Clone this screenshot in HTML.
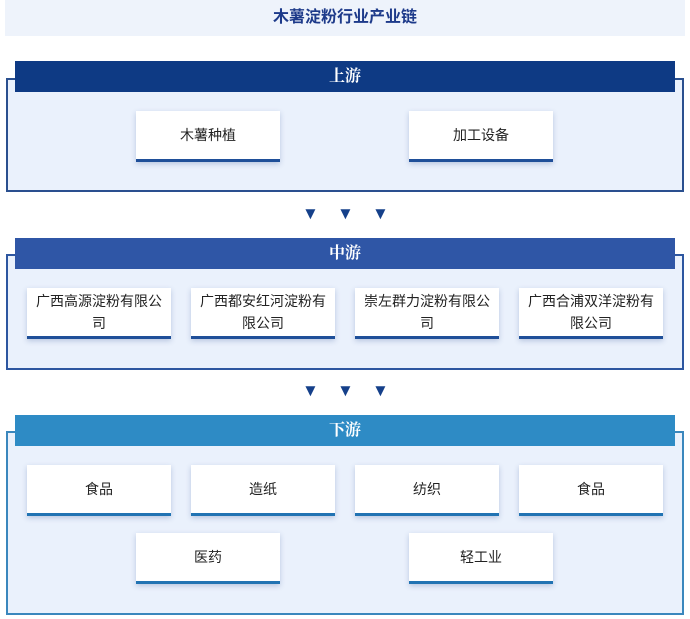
<!DOCTYPE html>
<html><head><meta charset="utf-8"><style>
*{margin:0;padding:0;box-sizing:border-box}
body{width:690px;height:619px;background:#fff;position:relative;font-family:"Liberation Sans","Noto Sans CJK SC",sans-serif;overflow:hidden}
.title{position:absolute;left:5px;top:0;width:680px;height:36px;background:#eef3fb;color:#1d3a8a;font-weight:bold;font-size:16px;text-align:center;line-height:36px}
.box{position:absolute;left:6px;width:678px;background:#eaf1fc;border:2px solid #2a4f8f}
.hdr{position:absolute;left:15px;width:660px;height:31px;color:#fff;font-family:"Liberation Serif","Noto Serif CJK SC",serif;font-weight:bold;font-size:16px;text-align:center;line-height:31px}
.card{position:absolute;width:144px;height:51px;background:#fff;border-bottom:3px solid #1f4f99;box-shadow:0 2px 5px rgba(40,70,140,.25);font-size:14px;color:#222;display:flex;align-items:center;justify-content:center;text-align:center;line-height:22px;padding:0 8px}
.arr{position:absolute;color:#15408a;font-size:17px}
</style></head><body>
<div class="title">木薯淀粉行业产业链</div>

<div class="box" style="top:78px;height:114px"></div>
<div class="hdr" style="top:61px;background:#0e3a84">上游</div>
<div class="card" style="left:136px;top:111px">木薯种植</div>
<div class="card" style="left:409px;top:111px">加工设备</div>

<div class="arr" style="left:302px;top:204px">▼</div><div class="arr" style="left:337px;top:204px">▼</div><div class="arr" style="left:372px;top:204px">▼</div>

<div class="box" style="top:254px;height:116px;border-color:#2d56a0"></div>
<div class="hdr" style="top:238px;background:#2f56a6">中游</div>
<div class="card" style="left:27px;top:288px">广西高源淀粉有限公司</div>
<div class="card" style="left:191px;top:288px">广西都安红河淀粉有限公司</div>
<div class="card" style="left:355px;top:288px">崇左群力淀粉有限公司</div>
<div class="card" style="left:519px;top:288px">广西合浦双洋淀粉有限公司</div>

<div class="arr" style="left:302px;top:381px">▼</div><div class="arr" style="left:337px;top:381px">▼</div><div class="arr" style="left:372px;top:381px">▼</div>

<div class="box" style="top:431px;height:184px;border-color:#3a87bd"></div>
<div class="hdr" style="top:415px;background:#2e8bc5">下游</div>
<div class="card" style="left:27px;top:465px;border-color:#2173b3">食品</div>
<div class="card" style="left:191px;top:465px;border-color:#2173b3">造纸</div>
<div class="card" style="left:355px;top:465px;border-color:#2173b3">纺织</div>
<div class="card" style="left:519px;top:465px;border-color:#2173b3">食品</div>
<div class="card" style="left:136px;top:533px;border-color:#2173b3">医药</div>
<div class="card" style="left:409px;top:533px;border-color:#2173b3">轻工业</div>
</body></html>
